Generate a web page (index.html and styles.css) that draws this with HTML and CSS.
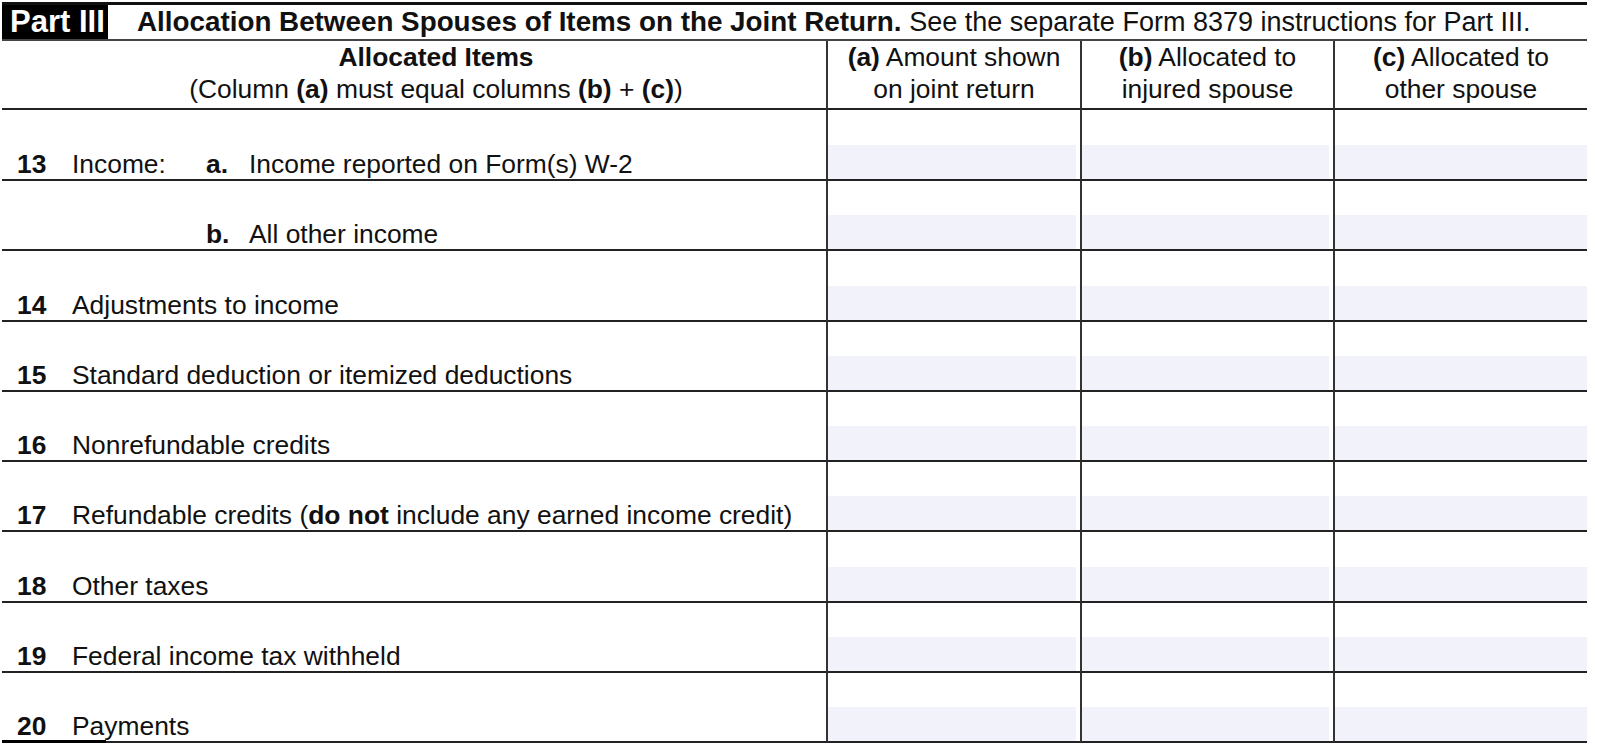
FILE: index.html
```html
<!DOCTYPE html>
<html lang="en">
<head>
<meta charset="utf-8">
<title>Form 8379 Part III</title>
<link rel="stylesheet" href="styles.css">
</head>
<body>
<div class="form">
  <div class="title">
    <div class="part">Part III</div>
    <div class="title-text"><b>Allocation Between Spouses of Items on the Joint Return.</b> <span class="title-reg">See the separate Form 8379 instructions for Part III.</span></div>
  </div>
  <div class="grid">
    <div class="hcell hleft"><b>Allocated Items</b><br>(Column <b>(a)</b> must equal columns <b>(b)</b> + <b>(c)</b>)</div>
    <div class="hcell col"><b>(a)</b> Amount shown<br>on joint return</div>
    <div class="hcell col"><b>(b)</b> Allocated to<br>injured spouse</div>
    <div class="hcell col"><b>(c)</b> Allocated to<br>other spouse</div>

    <div class="lcell"><span class="num">13</span><span class="cat">Income:</span><span class="sub">a.</span><span>Income reported on Form(s) W-2</span></div>
    <div class="dcell col"><div class="shade"></div></div>
    <div class="dcell col"><div class="shade"></div></div>
    <div class="dcell col last"><div class="shade"></div></div>

    <div class="lcell"><span class="num"></span><span class="cat"></span><span class="sub">b.</span><span>All other income</span></div>
    <div class="dcell col"><div class="shade"></div></div>
    <div class="dcell col"><div class="shade"></div></div>
    <div class="dcell col last"><div class="shade"></div></div>

    <div class="lcell"><span class="num">14</span><span>Adjustments to income</span></div>
    <div class="dcell col"><div class="shade"></div></div>
    <div class="dcell col"><div class="shade"></div></div>
    <div class="dcell col last"><div class="shade"></div></div>

    <div class="lcell"><span class="num">15</span><span>Standard deduction or itemized deductions</span></div>
    <div class="dcell col"><div class="shade"></div></div>
    <div class="dcell col"><div class="shade"></div></div>
    <div class="dcell col last"><div class="shade"></div></div>

    <div class="lcell"><span class="num">16</span><span>Nonrefundable credits</span></div>
    <div class="dcell col"><div class="shade"></div></div>
    <div class="dcell col"><div class="shade"></div></div>
    <div class="dcell col last"><div class="shade"></div></div>

    <div class="lcell"><span class="num">17</span><span>Refundable credits (<b>do not</b> include any earned income credit)</span></div>
    <div class="dcell col"><div class="shade"></div></div>
    <div class="dcell col"><div class="shade"></div></div>
    <div class="dcell col last"><div class="shade"></div></div>

    <div class="lcell"><span class="num">18</span><span>Other taxes</span></div>
    <div class="dcell col"><div class="shade"></div></div>
    <div class="dcell col"><div class="shade"></div></div>
    <div class="dcell col last"><div class="shade"></div></div>

    <div class="lcell"><span class="num">19</span><span>Federal income tax withheld</span></div>
    <div class="dcell col"><div class="shade"></div></div>
    <div class="dcell col"><div class="shade"></div></div>
    <div class="dcell col last"><div class="shade"></div></div>

    <div class="lcell end"><span class="num">20</span><span>Payments</span></div>
    <div class="dcell col"><div class="shade"></div></div>
    <div class="dcell col"><div class="shade"></div></div>
    <div class="dcell col last"><div class="shade"></div></div>
  </div>
</div>
</body>
</html>
```

FILE: styles.css
```css
html, body {
  margin: 0;
  padding: 0;
  background: #fff;
}
body {
  font-family: "Liberation Sans", Arial, Helvetica, sans-serif;
  color: #111;
}
.form {
  margin: 2px 0 0 2px;
  width: 1585px;
}
.title {
  display: flex;
  align-items: stretch;
  height: 34px;
  border-top: 3px solid #111;
  border-bottom: 2px solid #444;
}
.part {
  background: #000;
  color: #fff;
  font-weight: bold;
  font-size: 31px;
  line-height: 34px;
  width: 106px;
  box-sizing: border-box;
  padding-left: 8px;
  white-space: nowrap;
  overflow: hidden;
}
.title-text {
  margin-left: 29px;
  font-size: 27.8px;
  line-height: 34px;
  white-space: nowrap;
}
.title-reg {
  font-size: 27px;
}
.grid {
  display: grid;
  grid-template-columns: 824px 254px 253px 254px;
  grid-template-rows: 69px 71px repeat(8, 70.25px);
}
.grid > div {
  box-sizing: border-box;
  border-bottom: 2px solid #222;
}
.col {
  border-left: 2px solid #333;
}
.hcell {
  font-size: 26.4px;
  line-height: 32px;
  text-align: center;
  padding-top: 0;
  white-space: nowrap;
}
.hleft {
  padding-left: 44px;
}
.lcell {
  display: flex;
  align-items: flex-end;
  font-size: 26.4px;
  line-height: 29px;
  white-space: nowrap;
  position: relative;
}
.num {
  font-weight: bold;
  box-sizing: border-box;
  padding-left: 15px;
  width: 70px;
  flex: none;
}
.cat {
  width: 134px;
  flex: none;
}
.sub {
  font-weight: bold;
  width: 43px;
  flex: none;
}
.dcell {
  display: flex;
  flex-direction: column;
  justify-content: flex-end;
}
.shade {
  height: 34px;
  background: #f2f2fa;
  margin-right: 4px;
}
.last .shade {
  margin-right: 0;
}
.end::after {
  content: "";
  position: absolute;
  left: 0;
  bottom: -4px;
  width: 104px;
  height: 5px;
  background: #000;
}
```
